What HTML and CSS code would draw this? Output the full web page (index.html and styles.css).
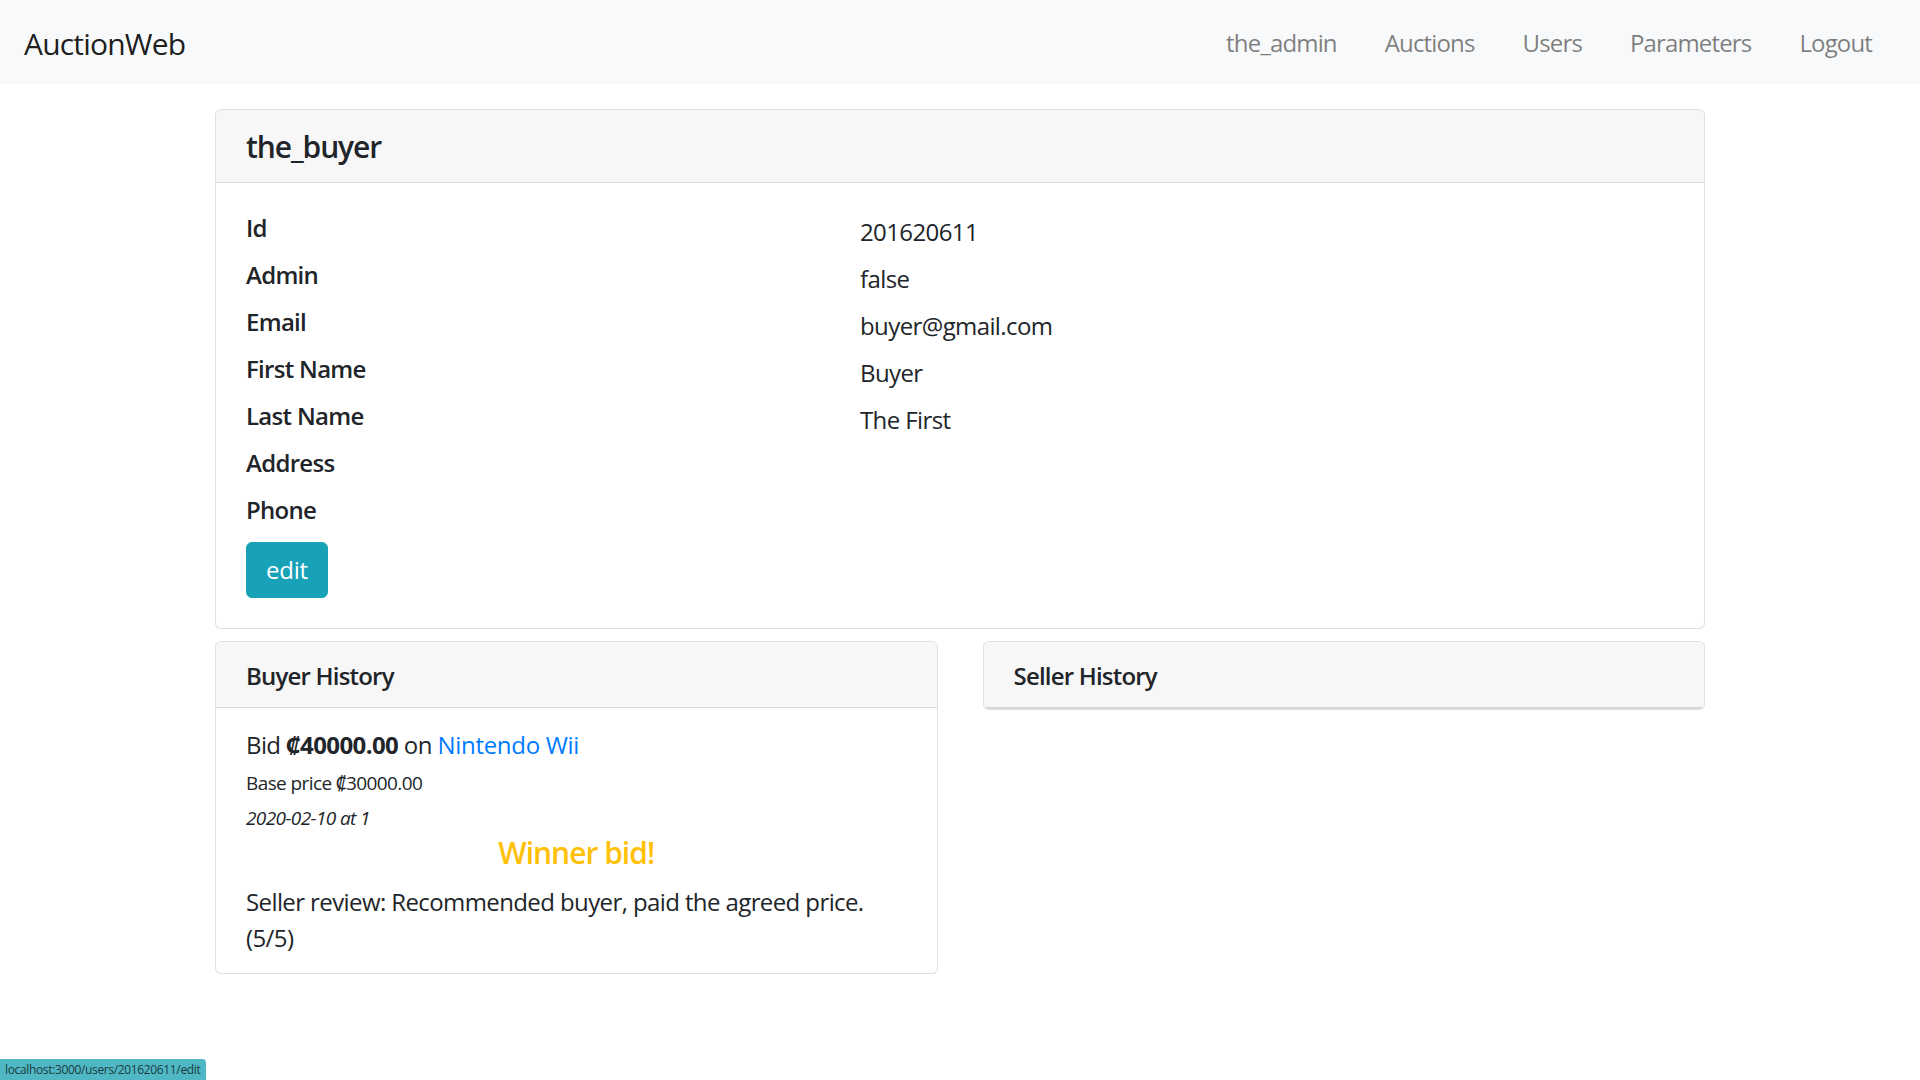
FILE: index.html
```html
<!DOCTYPE html>
<html lang="en">
<head>
<meta charset="utf-8">
<title>AuctionWeb</title>
<link rel="stylesheet" href="styles.css">
</head>
<body>
<nav class="navbar">
  <a class="brand" href="#">AuctionWeb</a>
  <ul class="nav">
    <li><a class="nav-link" href="#">the_admin</a></li>
    <li><a class="nav-link" href="#">Auctions</a></li>
    <li><a class="nav-link" href="#">Users</a></li>
    <li><a class="nav-link" href="#">Parameters</a></li>
    <li><a class="nav-link" href="#">Logout</a></li>
  </ul>
</nav>
<main class="container">
  <section class="card">
    <div class="card-header"><h5 class="title">the_buyer</h5></div>
    <div class="card-body">
      <dl class="details">
        <dt>Id</dt><dd>201620611</dd>
        <dt>Admin</dt><dd>false</dd>
        <dt>Email</dt><dd>buyer@gmail.com</dd>
        <dt>First Name</dt><dd>Buyer</dd>
        <dt>Last Name</dt><dd>The First</dd>
        <dt>Address</dt><dd></dd>
        <dt>Phone</dt><dd></dd>
      </dl>
      <a class="btn-info" href="#">edit</a>
    </div>
  </section>
  <div class="history">
    <section class="card">
      <div class="card-header hist-header">Buyer History</div>
      <div class="list-item">
        <p class="bid">Bid <b>₡40000.00</b> on <a class="link" href="#">Nintendo Wii</a></p>
        <small class="base">Base price ₡30000.00</small>
        <em class="date">2020-02-10 at 1</em>
        <h5 class="winner">Winner bid!</h5>
        <p class="review">Seller review: Recommended buyer, paid the agreed price. (5/5)</p>
      </div>
    </section>
    <section class="card">
      <div class="card-header hist-header only">Seller History</div>
    </section>
  </div>
</main>
<div class="status">localhost:3000/users/201620611/edit</div>
</body>
</html>
```
FILE: styles.css
```css
* { box-sizing: border-box; }
body {
  margin: 0;
  font-family: "Open Sans", "Noto Sans", sans-serif;
  font-size: 24px;
  line-height: 1.5;
  color: #212529;
  background: #fff;
  letter-spacing: -0.6px;
}
a { text-decoration: none; }
.navbar {
  height: 84px;
  background: #f8f9fa;
  padding: 2px 24px 0;
  display: flex;
  align-items: center;
  justify-content: space-between;
}
.brand {
  font-size: 30px;
  color: rgba(0,0,0,.9);
  line-height: 1.5;
  letter-spacing: -0.8px;
}
.nav {
  list-style: none;
  margin: 0;
  padding: 0;
  display: flex;
}
.nav-link {
  display: block;
  padding: 0 24px;
  color: rgba(0,0,0,.5);
  font-size: 24px;
  letter-spacing: -0.85px;
}
.container {
  width: 1490px;
  margin: 0 auto;
  padding-top: 25px;
}
.card {
  border: 1px solid rgba(0,0,0,.125);
  border-radius: 6px;
  background: #fff;
  overflow: hidden;
}
.card-header {
  background: #f7f7f7;
  padding: 19px 30px 17px;
  border-bottom: 1px solid rgba(0,0,0,.125);
}
.title {
  margin: 0;
  font-size: 30px;
  font-weight: 600;
  line-height: 36px;
  letter-spacing: -1.1px;
}
.card-body { padding: 27px 30px 30px; }
.details {
  margin: 0;
  display: grid;
  grid-template-columns: 614px 1fr;
}
.details dt {
  font-weight: 600;
  line-height: 35px;
  margin-bottom: 12px;
  letter-spacing: -0.7px;
}
.details dd {
  margin: 0 0 8px;
  padding-top: 4px;
  line-height: 35px;
}
.btn-info {
  display: inline-block;
  background: #17a2b8;
  border: 1px solid #17a2b8;
  color: #fff;
  padding: 9px 19px;
  line-height: 36px;
  border-radius: 6px;
  margin-top: 3px;
  letter-spacing: -0.2px;
}
.history {
  margin-top: 12px;
  display: grid;
  grid-template-columns: 1fr 1fr;
  gap: 45px;
  align-items: start;
}
.hist-header {
  font-size: 24px;
  font-weight: 600;
  line-height: 29px;
  letter-spacing: -0.8px;
}
.hist-header.only { border-bottom: 2px solid rgba(0,0,0,.13); }
.list-item { padding: 19px 30px 17px; }
.bid { margin: 0 0 6px; line-height: 36px; }
.link { color: #007bff; letter-spacing: -0.3px; }
.base {
  display: block;
  font-size: 19px;
  line-height: 29px;
  margin-bottom: 6px;
}
.date {
  display: block;
  font-size: 19px;
  line-height: 29px;
  margin-bottom: 2px;
}
.winner {
  margin: 0 0 13px;
  text-align: center;
  color: #ffc107;
  font-size: 30px;
  font-weight: 600;
  line-height: 36px;
  letter-spacing: -1px;
}
.review { margin: 0; line-height: 36px; }
.status {
  position: fixed;
  left: 0;
  bottom: 0;
  height: 21px;
  padding: 0 6px 0 5px;
  background: #4fb8c4;
  color: #1d3b40;
  font-size: 12px;
  line-height: 21px;
  letter-spacing: -0.35px;
  border-top-right-radius: 4px;
}
```
